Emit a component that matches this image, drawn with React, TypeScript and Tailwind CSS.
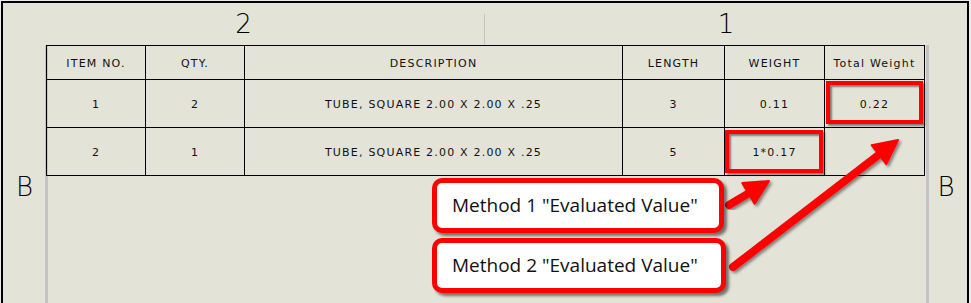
import type { ReactNode } from "react";

const COLS = "grid-cols-[99px_99px_378px_102px_100px_100px]";

const HEADERS = ["ITEM NO.", "QTY.", "DESCRIPTION", "LENGTH", "WEIGHT", "Total Weight"];

const ROWS = [
  ["1", "2", "TUBE, SQUARE 2.00 X 2.00 X .25", "3", "0.11", "0.22"],
  ["2", "1", "TUBE, SQUARE 2.00 X 2.00 X .25", "5", "1*0.17", ""],
];

function Cell({ children, tall, mark }: { children: ReactNode; tall?: boolean; mark?: string }) {
  return (
    <div
      className={`relative flex items-center justify-center border-r border-b border-black pt-[3px] ${
        tall ? "h-[48px]" : "h-[34px]"
      }`}
    >
      <span className="whitespace-pre tracking-[1.2px]">{children}</span>
      {mark && <div className={`absolute border-[4px] border-[#ff0000] ${mark}`} />}
    </div>
  );
}

// red highlight boxes around the evaluated cells
function markFor(r: number, c: number) {
  if (r === 0 && c === 5)
    return "left-[1px] top-[1px] right-[1px] bottom-[3px] shadow-[2px_2px_2px_rgba(0,0,0,0.45),inset_2px_2px_2px_rgba(0,0,0,0.45)]";
  if (r === 1 && c === 4)
    return "left-0 top-[2px] right-[1px] bottom-[2px] shadow-[2px_2px_2px_rgba(0,0,0,0.45),inset_2px_2px_2px_rgba(0,0,0,0.45)]";
  return undefined;
}

function BomTable() {
  return (
    <div
      className={`-ml-[2px] grid w-[879px] ${COLS} border-l border-t border-black text-[11px] text-[#111]`}
      style={{ fontFamily: '"DejaVu Sans", sans-serif' }}
    >
      {HEADERS.map((h) => (
        <Cell key={h}>{h}</Cell>
      ))}
      {ROWS.map((row, r) =>
        row.map((v, c) => (
          <Cell key={`${r}-${c}`} tall mark={markFor(r, c)}>
            {v}
          </Cell>
        )),
      )}
    </div>
  );
}

function Callout({ children, className }: { children: ReactNode; className: string }) {
  return (
    <div
      className={`absolute flex items-center rounded-[10px] border-[5px] border-[#ff0000] bg-white pl-[15px] text-[19px] text-[#111] shadow-[3px_3px_3px_rgba(0,0,0,0.5)] ${className}`}
      style={{ fontFamily: '"Open Sans", sans-serif' }}
    >
      {children}
    </div>
  );
}

function Arrow({ x1, y1, x2, y2 }: { x1: number; y1: number; x2: number; y2: number }) {
  const len = Math.hypot(x2 - x1, y2 - y1);
  const ux = (x2 - x1) / len;
  const uy = (y2 - y1) / len;
  const head = 24;
  const half = 12;
  const bx = x2 - ux * head;
  const by = y2 - uy * head;
  const pts = `${x2},${y2} ${bx - uy * half},${by + ux * half} ${bx + uy * half},${by - ux * half}`;
  return (
    <g filter="url(#shade)">
      <line x1={x1} y1={y1} x2={bx + ux * 2} y2={by + uy * 2} stroke="#ff0000" strokeWidth={8} strokeLinecap="round" />
      <polygon points={pts} fill="#ff0000" stroke="#ff0000" strokeWidth={2} strokeLinejoin="round" />
    </g>
  );
}

export default function App() {
  const zone = '"DejaVu Sans", sans-serif';
  return (
    <div className="relative h-[303px] w-[971px] overflow-hidden bg-[#ececec]">
      <div className="ml-px mt-px flex h-[302px] w-[968px] flex-col border-x-2 border-t-2 border-black bg-[#e4e3d8]">
        {/* zone numbers */}
        <div className="flex h-[42px]" style={{ fontFamily: zone }}>
          <div className="flex w-[481px] items-center justify-center text-[26px] font-extralight leading-none">2</div>
          <div className="mt-auto h-[31px] w-px bg-[#c4c4c4]" />
          <div className="flex flex-1 items-center justify-center text-[26px] font-extralight leading-none">1</div>
        </div>

        <div className="flex flex-1">
          <div className="w-[42px] pt-[129px] pl-[1px] text-center text-[26px] font-extralight leading-none" style={{ fontFamily: zone }}>
            B
          </div>
          <div className="w-[884px] border-x-[3px] border-[#c4c4c4]">
            <BomTable />
          </div>
          <div className="flex-1 pt-[129px] pr-[4px] text-center text-[26px] font-extralight leading-none" style={{ fontFamily: zone }}>
            B
          </div>
        </div>
      </div>

      <svg className="pointer-events-none absolute inset-0" width={971} height={303}>
        <defs>
          <filter id="shade" x="-20%" y="-20%" width="140%" height="140%">
            <feDropShadow dx="2" dy="2" stdDeviation="1.5" floodColor="#000" floodOpacity="0.45" />
          </filter>
        </defs>
        <Arrow x1={729} y1={205} x2={769} y2={181} />
        <Arrow x1={733} y1={267} x2={898} y2={140} />
      </svg>

      <Callout className="left-[432px] top-[178px] h-[55px] w-[292px]">Method 1 "Evaluated Value"</Callout>
      <Callout className="left-[432px] top-[238px] h-[55px] w-[294px]">Method 2 "Evaluated Value"</Callout>
    </div>
  );
}
